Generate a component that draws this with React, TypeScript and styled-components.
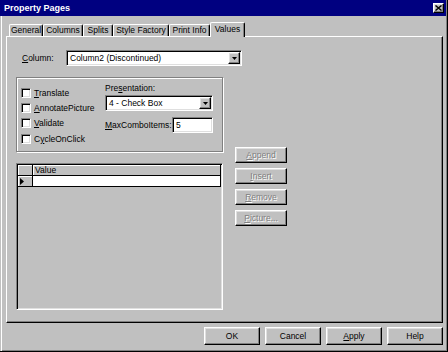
import styled, { createGlobalStyle, css } from "styled-components";

const GlobalStyle = createGlobalStyle`
  html, body {
    margin: 0;
    padding: 0;
    background: #c0c0c0;
  }
  body {
    font-family: "Liberation Sans", Arial, sans-serif;
    font-size: 8.5px;
    color: #000;
  }
  * {
    box-sizing: border-box;
  }
`;

// win95 bevels
const raised = css`
  border: 1px solid;
  border-color: #fff #000 #000 #fff;
  box-shadow: inset -1px -1px #808080, inset 1px 1px #dfdfdf;
`;

const sunken = css`
  border: 1px solid;
  border-color: #808080 #fff #fff #808080;
  box-shadow: inset 1px 1px #000, inset -1px -1px #dfdfdf;
`;

const tabs = [
  { label: "General", width: 34 },
  { label: "Columns", width: 40 },
  { label: "Splits", width: 30 },
  { label: "Style Factory", width: 56 },
  { label: "Print Info", width: 41 },
  { label: "Values", width: 35, active: true },
];

const checks = [
  { key: "T", rest: "ranslate" },
  { key: "A", rest: "nnotatePicture" },
  { key: "V", rest: "alidate" },
  { pre: "C", key: "y", rest: "cleOnClick" },
];

const sideButtons = [
  { key: "A", rest: "ppend" },
  { key: "I", rest: "nsert" },
  { key: "R", rest: "emove" },
  { key: "P", rest: "icture..." },
];

const App = () => {
  return (
    <>
      <GlobalStyle />
      <Window>
        <TitleBar>
          <Title>Property Pages</Title>
          <CloseButton>
            <svg width="7" height="6" viewBox="0 0 7 6">
              <path d="M0.5 0.5L6.5 5.5M6.5 0.5L0.5 5.5" stroke="#000" strokeWidth="1.4" />
            </svg>
          </CloseButton>
        </TitleBar>

        <Body>
          <TabStrip>
            {tabs.map((t) => (
              <Tab key={t.label} $width={t.width} $active={t.active}>
                {t.label}
              </Tab>
            ))}
          </TabStrip>

          <Panel>
            <ColumnRow>
              <FieldLabel>
                <Key>C</Key>olumn:
              </FieldLabel>
              <Combo $width={176}>
                <ComboText>Column2 (Discontinued)</ComboText>
                <DropButton>
                  <svg width="5" height="3" viewBox="0 0 5 3">
                    <path d="M0 0H5L2.5 3Z" fill="#000" />
                  </svg>
                </DropButton>
              </Combo>
            </ColumnRow>

            <Lower>
              <LeftCol>
                <GroupBox>
                  <CheckCol>
                    {checks.map((c) => (
                      <CheckRow key={c.rest}>
                        <CheckBox />
                        <span>
                          {c.pre}
                          <Key>{c.key}</Key>
                          {c.rest}
                        </span>
                      </CheckRow>
                    ))}
                  </CheckCol>
                  <OptionCol>
                    <SmallLabel>
                      Pre<Key>s</Key>entation:
                    </SmallLabel>
                    <Combo $width={108}>
                      <ComboText>4 - Check Box</ComboText>
                      <DropButton>
                        <svg width="5" height="3" viewBox="0 0 5 3">
                          <path d="M0 0H5L2.5 3Z" fill="#000" />
                        </svg>
                      </DropButton>
                    </Combo>
                    <MaxRow>
                      <span>
                        <Key>M</Key>axComboItems:
                      </span>
                      <TextInput>5</TextInput>
                    </MaxRow>
                  </OptionCol>
                </GroupBox>

                <DataGrid>
                  <GridTable>
                    <GridCell $head />
                    <GridCell $head>Value</GridCell>
                    <GridCell $head>
                      <svg width="4" height="7" viewBox="0 0 4 7">
                        <path d="M0 0L4 3.5L0 7Z" fill="#000" />
                      </svg>
                    </GridCell>
                    <GridCell $white />
                  </GridTable>
                </DataGrid>
              </LeftCol>

              <SideButtons>
                {sideButtons.map((b) => (
                  <PushButton key={b.rest} $width={52} $height={16} disabled>
                    <Key>{b.key}</Key>
                    {b.rest}
                  </PushButton>
                ))}
              </SideButtons>
            </Lower>
          </Panel>

          <Footer>
            <PushButton $width={56} $height={18}>OK</PushButton>
            <PushButton $width={56} $height={18}>Cancel</PushButton>
            <PushButton $width={56} $height={18}>
              <Key>A</Key>pply
            </PushButton>
            <PushButton $width={56} $height={18}>Help</PushButton>
          </Footer>
        </Body>
      </Window>
    </>
  );
};

const Window = styled.div`
  width: 448px;
  height: 352px;
  background: #c0c0c0;
  border-right: 1px solid #000;
  border-bottom: 1px solid #000;
  box-shadow: inset -1px -1px #808080;
  display: flex;
  flex-direction: column;
`;

const TitleBar = styled.div`
  height: 16px;
  margin-right: 1px;
  background: #000080;
  display: flex;
  align-items: center;
  justify-content: space-between;
  padding: 0 2px 0 4px;
`;

const Title = styled.span`
  color: #fff;
  font-weight: bold;
  font-size: 9px;
`;

const CloseButton = styled.div`
  ${raised};
  width: 11px;
  height: 10px;
  background: #c0c0c0;
  display: flex;
  align-items: center;
  justify-content: center;
`;

const Body = styled.div`
  flex: 1;
  display: flex;
  flex-direction: column;
  padding: 0 4px 0 6px;
  box-shadow: inset 1px 0 #c0c0c0, inset 2px 0 #fff;
`;

const TabStrip = styled.div`
  position: relative;
  z-index: 1;
  display: flex;
  align-items: flex-end;
  height: 14px;
  margin-top: 6px;
  padding-left: 3px;
`;

const Tab = styled.div<{ $width: number; $active?: boolean }>`
  width: ${(p) => p.$width}px;
  height: ${(p) => (p.$active ? 15 : 12)}px;
  margin-bottom: ${(p) => (p.$active ? -1 : 0)}px;
  background: #c0c0c0;
  border-top: 1px solid #fff;
  border-left: 1px solid #fff;
  border-right: 1px solid #000;
  border-radius: 2px 2px 0 0;
  box-shadow: inset -1px 0 #808080;
  text-align: center;
  line-height: ${(p) => (p.$active ? 12 : 11)}px;
  white-space: nowrap;
`;

const Panel = styled.div`
  height: 287px;
  display: flex;
  flex-direction: column;
  padding: 13px 9px;
  border: 1px solid;
  border-color: #fff #000 #000 #fff;
  box-shadow: inset -1px -1px #808080;
`;

const ColumnRow = styled.div`
  display: flex;
  align-items: center;
  height: 16px;
`;

const FieldLabel = styled.span`
  width: 50px;
  padding-left: 6px;
`;

const Key = styled.span`
  text-decoration: underline;
`;

const Combo = styled.div<{ $width: number }>`
  ${sunken};
  width: ${(p) => p.$width}px;
  height: 16px;
  background: #fff;
  display: flex;
  align-items: center;
  justify-content: space-between;
  padding: 1px 1px 1px 2px;
`;

const ComboText = styled.span`
  padding-left: 1px;
  white-space: nowrap;
`;

const DropButton = styled.div`
  ${raised};
  width: 12px;
  height: 12px;
  background: #c0c0c0;
  display: flex;
  align-items: center;
  justify-content: center;
`;

const Lower = styled.div`
  display: flex;
  gap: 12px;
  margin-top: 11px;
`;

const LeftCol = styled.div`
  width: 207px;
  display: flex;
  flex-direction: column;
  gap: 11px;
`;

const GroupBox = styled.div`
  height: 75px;
  display: flex;
  padding: 7px 0 0 4px;
  border: 1px solid #808080;
  box-shadow: inset 1px 1px #fff, 1px 1px #fff;
`;

const CheckCol = styled.div`
  width: 84px;
  display: flex;
  flex-direction: column;
`;

const CheckRow = styled.div`
  height: 15.3px;
  display: flex;
  align-items: center;
  gap: 3px;
  white-space: nowrap;
`;

const CheckBox = styled.div`
  ${sunken};
  flex-shrink: 0;
  width: 10px;
  height: 10px;
  background: #fff;
`;

const OptionCol = styled.div`
  width: 108px;
  display: flex;
  flex-direction: column;
  margin-top: -2px;
`;

const SmallLabel = styled.div`
  line-height: 10px;
  margin-bottom: 2px;
`;

const MaxRow = styled.div`
  display: flex;
  align-items: center;
  justify-content: space-between;
  margin-top: 6px;
`;

const TextInput = styled.div`
  ${sunken};
  width: 41px;
  height: 16px;
  background: #fff;
  display: flex;
  align-items: center;
  padding-left: 3px;
`;

const DataGrid = styled.div`
  ${sunken};
  height: 147px;
  padding: 1px;
  background: #c0c0c0;
`;

const GridTable = styled.div`
  display: grid;
  grid-template-columns: 15px 188px;
  grid-auto-rows: 11px;
`;

const GridCell = styled.div<{ $head?: boolean; $white?: boolean }>`
  background: ${(p) => (p.$white ? "#fff" : "#c0c0c0")};
  border-right: 1px solid #000;
  border-bottom: 1px solid #000;
  box-shadow: ${(p) => (p.$head ? "inset 1px 1px #fff" : "none")};
  display: flex;
  align-items: center;
  padding-left: 2px;
  line-height: 10px;
`;

const SideButtons = styled.div`
  display: flex;
  flex-direction: column;
  gap: 5px;
  margin-top: 70px;
`;

const PushButton = styled.button<{ $width: number; $height: number }>`
  ${raised};
  width: ${(p) => p.$width}px;
  height: ${(p) => p.$height}px;
  padding: 0;
  background: #c0c0c0;
  font: inherit;
  color: #000;
  display: flex;
  align-items: center;
  justify-content: center;

  &:disabled {
    color: #808080;
    text-shadow: 1px 1px #fff;
  }
`;

const Footer = styled.div`
  display: flex;
  justify-content: flex-end;
  gap: 5px;
  margin-top: 4px;
`;

export default App;
